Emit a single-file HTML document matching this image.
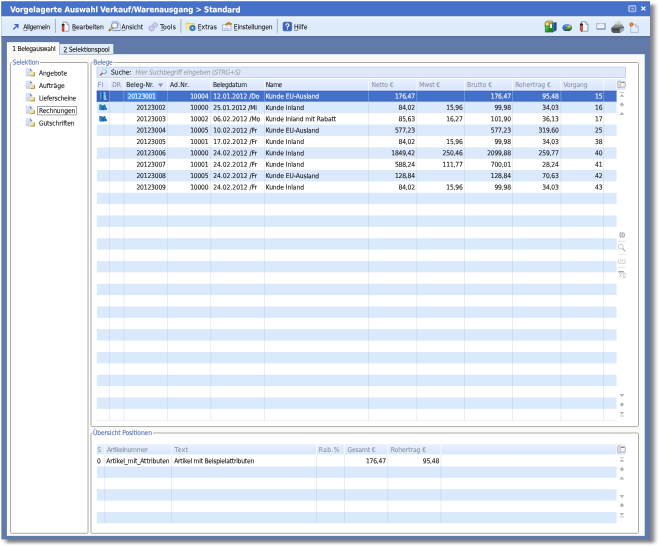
<!DOCTYPE html>
<html><head><meta charset="utf-8"><title>Vorgelagerte Auswahl Verkauf/Warenausgang</title>
<style>
html,body{margin:0;padding:0;background:#fff;}
body{width:659px;height:548px;overflow:hidden;}
svg{display:block;will-change:transform;}
text{font-family:"DejaVu Sans Condensed","Liberation Sans",sans-serif;white-space:pre;stroke-width:0.07px;}
</style></head><body>
<svg width="659" height="548" viewBox="0 0 659 548" font-size="6.7">
<defs>
<filter id="sh" x="-2%" y="-2%" width="104%" height="104%"><feGaussianBlur stdDeviation="2.0 1.5"/></filter>
<linearGradient id="gTb" x1="0" y1="0" x2="0" y2="1"><stop offset="0" stop-color="#f3f8fe"/><stop offset="0.12" stop-color="#e4effc"/><stop offset="0.4" stop-color="#deebfb"/><stop offset="1" stop-color="#deebfb"/></linearGradient>
<linearGradient id="gHd" x1="0" y1="0" x2="0" y2="1"><stop offset="0" stop-color="#e8f1fe"/><stop offset="1" stop-color="#d8e6fc"/></linearGradient>
<linearGradient id="gDoc" x1="0" y1="0" x2="1" y2="1"><stop offset="0" stop-color="#eef2fd"/><stop offset="1" stop-color="#aebbe8"/></linearGradient><linearGradient id="gFol" x1="0" y1="0" x2="1" y2="1"><stop offset="0" stop-color="#fdf8c4"/><stop offset="1" stop-color="#e6cf62"/></linearGradient>
<g id="docf"><path d="M0.6 0.8H8L12 4.8V15H0.6Z" fill="url(#gDoc)" stroke="#aab6de" stroke-width="0.8"/><path d="M8 0.8L12 4.8H8Z" fill="#5c6eb4"/><path d="M7 8.6H10L11 7.6H15.6Q17.2 7.8 17.2 10V15.2H7Z" fill="url(#gFol)"/><path d="M16.2 8V15.2H9" fill="none" stroke="#8c7238" stroke-width="1.2"/></g>
<g id="mag"><circle cx="10" cy="6.4" r="4.4" fill="#d6f1fa" stroke="#a9bedb" stroke-width="1.2"/><path d="M13.8 4.4A4.4 4.4 0 0 1 8.6 10.6" stroke="#6f86b8" stroke-width="1.5" fill="none"/><path d="M6.4 9.9L3.2 13.2" stroke="#ad6a4c" stroke-width="3" stroke-linecap="round"/></g>
<g id="book"><path d="M0.6 0.8L3.4 0.2L7 1.2V3.4L8.8 2.6V0.6L12.6 0.2L13.4 6L15.6 7.8V10.2L12.6 10.8L9.4 11.6L6.6 11L3.6 11.8L0.6 10.6Z" fill="#2b79b6"/><path d="M0.6 0.8L3.4 0.2V11.6L0.6 10.6Z" fill="#3c93cc"/><path d="M6.6 3.4L8.8 2.6V11.4L6.6 11Z" fill="#1b5c98"/><path d="M12.6 0.2L13.4 6L15.6 7.8V10.2L12.6 10.8Z" fill="#1f64a2"/></g>
<g id="bookS"><path d="M0.8 1L5 0.2V10.8L2 11.6Z" fill="#4aa0dc"/><path d="M5 1H8.6V11.8H5Z" fill="#1f4f9a"/><path d="M8.6 0.4L12.2 0L13 8L15.2 11.8H11L8.6 10.8Z" fill="#7fc0f2"/><path d="M12.2 0L13 8L15.2 11.8H13.4L11.6 8Z" fill="#b8dcf8"/></g>
<g id="cfg"><path d="M6 1.6H2.6Q1.2 1.6 1.2 3V12.6Q1.2 14 2.6 14H6" fill="#f2f2f2" stroke="#8e8e8e" stroke-width="1.3"/><rect x="5.4" y="3.4" width="9.4" height="9.4" rx="1.6" fill="#fff" stroke="#8a8a8a" stroke-width="1.2"/><path d="M6.6 3.2H13.6V5.2H6.6Z" fill="#9c8484"/><circle cx="8" cy="8.4" r="0.9" fill="#d8a0a0"/><circle cx="12" cy="8.4" r="0.9" fill="#d8a0a0"/></g>
<g id="n_first" fill="#b3b3b3"><rect x="2" y="1.2" width="8" height="1.6"/><path d="M6 4.5L10.5 10H1.5Z"/></g>
<g id="n_last" fill="#b3b3b3"><rect x="2" y="9.2" width="8" height="1.6"/><path d="M6 7.5L10.5 2H1.5Z"/></g>
<g id="n_dia" fill="#b3b3b3"><path d="M6 1.5L10.5 6L6 10.5L1.5 6Z"/></g>
<g id="n_up" fill="#b3b3b3"><path d="M6 3L11 9H1Z"/></g>
<g id="n_down" fill="#b3b3b3"><path d="M6 9L11 3H1Z"/></g>
<g id="midtools" fill="none" stroke="#c0c0c0" stroke-width="0.8">
<path d="M3.3 1.4Q1.9 4 3.3 6.6M6.5 1.4Q7.9 4 6.5 6.6M4.9 1.2V6.8" stroke="#8e8e8e" stroke-width="0.95"/>
<path d="M0.8 10.3H8.4" stroke="#dedede"/>
<rect x="1.4" y="13.4" width="4.4" height="4.4" rx="0.8"/><path d="M5.6 17.6L8 20.4" stroke="#a8a8a8" stroke-width="1.2"/>
<path d="M0.8 23.3H8.4" stroke="#dedede"/>
<path d="M1.2 28V32.3H7.8V28M3.4 28V30.2H5.6V28" stroke="#c6c6c6"/>
<path d="M0.8 36.4H8.4" stroke="#dedede"/>
<path d="M1 40.8H6.6" stroke="#8a8a8a" stroke-width="1.1"/><path d="M2.2 42L4.2 46.2M4.4 42L2.4 46.2M6 42V46.4H8V42Z" stroke="#c6c6c6"/>
</g>
<g id="arrow"><path d="M1.6 14.4L12.4 3.6M4.6 2.2H13.8V11.4" fill="none" stroke="#3d63b8" stroke-width="3.1"/></g>
<g id="docred"><path d="M4 1.2H11L14.6 4.8V14.8H4Z" fill="#fdfdff" stroke="#6f7686" stroke-width="1.1"/><path d="M11 1.2V4.8H14.6" fill="#e4e8f2" stroke="#6f7686" stroke-width="0.9"/><path d="M1.6 4.2Q4 2.6 7 4.4L6.4 6.8H2.4Z" fill="#2e2424"/><path d="M2.4 6.6H6V13.2L4.2 15.6L2.4 13.2Z" fill="#cf3f24" stroke="#8a2414" stroke-width="0.7"/><path d="M3.9 7.4V12.6" stroke="#f08a6a" stroke-width="0.8"/></g>
<g id="view"><path d="M5.4 1.2H12L15.4 4.6V14.4H5.4Z" fill="#dce8f8" stroke="#a4b6dc" stroke-width="1"/><path d="M12 1.2V4.6H15.4" fill="#c8d8f0" stroke="#a4b6dc" stroke-width="0.8"/><circle cx="8.4" cy="7" r="3.9" fill="#f2fbff" stroke="#8998b8" stroke-width="1.4"/><path d="M5.4 10.4L2.4 13.6" stroke="#7a5a40" stroke-width="3" stroke-linecap="round"/><path d="M5.4 10.3L3.2 12.7" stroke="#e2c464" stroke-width="1.8" stroke-linecap="round"/><path d="M6 14.2H15.2" stroke="#7f98d0" stroke-width="1.4"/></g>
<g id="gears"><circle cx="10.6" cy="5" r="3.6" fill="#d3cfe8" stroke="#aaa5cf" stroke-width="1.7" stroke-dasharray="1.5 1.1"/><circle cx="5.2" cy="10.6" r="4" fill="#cfcbe6" stroke="#a39ecb" stroke-width="1.8" stroke-dasharray="1.6 1.2"/><circle cx="10.6" cy="5" r="1.2" fill="#f1eff9" stroke="#aaa5cf" stroke-width="0.5"/><circle cx="5.2" cy="10.6" r="1.4" fill="#f1eff9" stroke="#a39ecb" stroke-width="0.5"/></g>
<g id="extras"><path d="M1 4L5 2.5L7 4H13.5L15 14H2.5Z" fill="#f7de7e" stroke="#d8b44a" stroke-width="0.9"/><path d="M1 5.5H12L13.5 14.5H2.5Z" fill="#fbe99a"/><circle cx="11" cy="11" r="4.2" fill="#2f7fe0" stroke="#1c5bb8" stroke-width="0.8"/><circle cx="11" cy="11" r="1.4" fill="#d9ecff"/></g>
<g id="settings"><rect x="1" y="5.5" width="13" height="9.5" fill="#f4f7fc" stroke="#8c9bb8" stroke-width="1"/><path d="M2.5 13.5V10L5 11.5L8 8.5L12.5 13.5Z" fill="#b9cdee"/><path d="M5 4.5L10.5 0.8L15.5 3.5L14 5.5L10.5 4L7.5 6.5Z" fill="#d88a1e" stroke="#9c5c10" stroke-width="0.7"/></g>
<g id="help"><rect x="0.6" y="0.6" width="14.8" height="14.8" rx="2" fill="#3c63c2" stroke="#2c4c9e" stroke-width="1"/><path d="M5.2 6Q5.2 3.2 8 3.2Q10.8 3.2 10.8 5.6Q10.8 7.2 8 8.4V10" fill="none" stroke="#fff" stroke-width="2"/><rect x="7" y="11.2" width="2" height="2" fill="#fff"/></g>
<g id="boxes"><path d="M0.6 3.4L3 0.8H10.6L11.4 3.4V8H0.6Z" fill="#a89a3a" stroke="#5c5a2a" stroke-width="0.7"/><path d="M1.6 3.2H5V7H1.6Z" fill="#f0ea9a"/><path d="M3 1.2H10.4L10.8 2.8H2Z" fill="#d0c060"/><path d="M10.8 3.6L15.6 2.8V13.2L10.8 15.2Z" fill="#23518c" stroke="#17325c" stroke-width="0.6"/><path d="M10.8 3.6L12.6 3.3V14.4L10.8 15.2Z" fill="#3f78bc"/><path d="M1 7.6H11V15.6H1Z" fill="#2e9e2e" stroke="#1a5c1e" stroke-width="0.7"/><path d="M1.4 8H6L3 12L1.4 12.6Z" fill="#4fc04a"/><path d="M6 11L11 9V15.4H4Z" fill="#1f7f26"/><path d="M7.4 5H9.8V10H7.4Z" fill="#ffffff"/></g>
<g id="pie"><ellipse cx="8" cy="9.2" rx="7.4" ry="6.2" fill="#1c3868"/><ellipse cx="8" cy="7.6" rx="7.3" ry="5.9" fill="#3e6fb8"/><path d="M2.4 5Q6 1.4 11 2.2L8 7.6Z" fill="#6a98d8"/><path d="M8 7.6L14.9 5.6A7.3 5.9 0 0 1 4.4 12.7Z" fill="#4a9e36"/><path d="M8 7.6L10.2 3.4Q13.8 3.6 14.9 5.6L11.6 8.6Z" fill="#c9cc3c"/><path d="M5.6 12.2Q10 13 13.4 10.6L14.4 11.4Q10 15 5 13.4Z" fill="#245a20"/></g>
<g id="mail"><rect x="0.8" y="0.8" width="14.4" height="13" fill="#f4f5fc" stroke="#8f97bd" stroke-width="1.3"/><path d="M1.2 1.4L8 7.4L14.8 1.4" fill="none" stroke="#c0c5dc" stroke-width="1"/><path d="M0.4 14.6H15.6" stroke="#6b74a4" stroke-width="2"/><path d="M15.2 1V14" stroke="#7a83b0" stroke-width="1.2"/></g>
<g id="printer"><path d="M6.2 0.3H12L13 4.6H5.2Z" fill="#f5f9f0" stroke="#a8b4a4" stroke-width="0.5"/><path d="M7 1.3H11.4L12 3.7H6.4Z" fill="#b4d89c"/><path d="M4.4 4.2H13.6L15.8 8L0.4 9Z" fill="#8e9498"/><path d="M0.4 9L15.8 8V11.6L10.8 15.8H2.6L0.4 13.4Z" fill="#565c60"/><path d="M11 10.4L15.8 8.2V11.6L10.8 15.8Z" fill="#a6aaae"/><path d="M2.2 10.6H9.8V12.1H2.2Z" fill="#34383c"/><path d="M0.4 9L15.8 8" stroke="#3c4044" stroke-width="0.7"/></g>
<g id="docdot"><path d="M2.2 3H10.4L14.8 7.2V15.4H2.2Z" fill="#e3ebf9" stroke="#8fa5d2" stroke-width="1"/><path d="M10.4 3V7.2H14.8" fill="#c5d5f0" stroke="#8fa5d2" stroke-width="0.8"/><circle cx="3.4" cy="3.2" r="2.9" fill="#e8722a" stroke="#b84e18" stroke-width="0.6"/><circle cx="3" cy="2.6" r="1" fill="#f9b478"/></g>
<g id="maxi"><rect x="0.8" y="0.8" width="14.4" height="14.4" rx="1" fill="#86a4e4" stroke="#c9d7f5" stroke-width="1.5"/><rect x="5.2" y="4.6" width="7" height="6.6" fill="#9db6ea" stroke="#3b5bb4" stroke-width="1.5"/><path d="M3.4 12.6L5.6 10.6" stroke="#3b5bb4" stroke-width="1.5"/></g>
<g id="close"><path d="M2 2L14 14M14 2L2 14" stroke="#fff" stroke-width="4.4"/></g>
</defs>

<rect x="5.77" y="4.75" width="648.63" height="537.95" fill="#26262e" opacity="0.6" filter="url(#sh)"/>
<rect x="1.37" y="1.45" width="648.63" height="537.95" fill="#617aa7" />
<rect x="1.37" y="1.45" width="648.63" height="14.85" fill="#4572c8" />
<text x="10.13" y="12.2" transform="rotate(0.05 10.13 12.2)" fill="#fff" stroke="#fff" letter-spacing="-0.025" font-weight="bold" font-size="7.9">Vorgelagerte Auswahl Verkauf/Warenausgang &gt; Standard</text>
<rect x="1.37" y="16.3" width="648.63" height="19.6" fill="url(#gTb)" />
<rect x="1.37" y="34.9" width="648.63" height="1" fill="#f3f8fe" />
<rect x="1.37" y="35.9" width="648.63" height="1.5" fill="#566fa6" />
<rect x="6.9" y="54.4" width="637.8" height="481.5" fill="#fbfaf6" />
<rect x="6.9" y="42.4" width="52.3" height="12.8" fill="#fcfbf8" />
<rect x="6.9" y="42.4" width="52.3" height="0.7" fill="#ffffff" />
<rect x="59.5" y="44.2" width="53.8" height="10.2" fill="#e2ebf8" />
<rect x="59.5" y="44.2" width="53.8" height="0.6" fill="#f3f7fd" />
<rect x="59.4" y="53.9" width="53.9" height="0.7" fill="#a9b6cf" />
<rect x="113.3" y="54.4" width="531.4" height="0.6" fill="#ffffff" opacity="0.8"/>
<text x="12.3" y="50.98" transform="rotate(0.05 12.3 50.98)" fill="#111" stroke="#111" letter-spacing="-0.314">1 Belegauswahl</text>
<text x="63.5" y="51.78" transform="rotate(0.05 63.5 51.78)" fill="#111" stroke="#111" letter-spacing="-0.228">2 Selektionspool</text>
<rect x="63.75" y="52.53" width="3.43" height="0.6" fill="#111" opacity="0.65"/>
<rect x="11.1" y="63.1" width="77.5" height="470.8" rx="1.1" fill="none" stroke="#fff" stroke-width="0.6"/>
<rect x="10.5" y="62.5" width="77.5" height="470.8" rx="1.1" fill="#fff" stroke="#a3a39c" stroke-width="0.9"/>
<rect x="12.1" y="59.5" width="27.9" height="6" fill="#fdfcf9" />
<text x="12.6" y="64.48" transform="rotate(0.05 12.6 64.48)" fill="#4f6fb6" stroke="#4f6fb6" letter-spacing="-0.169" stroke-width="0.02">Selektion</text>
<rect x="91.6" y="63.1" width="547.5" height="364.1" rx="1.1" fill="none" stroke="#fff" stroke-width="0.6"/>
<rect x="91" y="62.5" width="547.5" height="364.1" rx="1.1" fill="#fff" stroke="#a3a39c" stroke-width="0.9"/>
<rect x="92.8" y="59.5" width="20.7" height="6" fill="#fdfcf9" />
<text x="93.3" y="64.48" transform="rotate(0.05 93.3 64.48)" fill="#4f6fb6" stroke="#4f6fb6" letter-spacing="-0.273" stroke-width="0.02">Belege</text>
<rect x="91.6" y="433.6" width="547.5" height="100.3" rx="1.1" fill="none" stroke="#fff" stroke-width="0.6"/>
<rect x="91" y="433" width="547.5" height="100.3" rx="1.1" fill="#fff" stroke="#a3a39c" stroke-width="0.9"/>
<rect x="92.5" y="430" width="60.4" height="6" fill="#fdfcf9" />
<text x="93" y="434.98" transform="rotate(0.05 93 434.98)" fill="#4f6fb6" stroke="#4f6fb6" letter-spacing="-0.133" stroke-width="0.02">Übersicht Positionen</text>
<use href="#docf" transform="translate(25.9 68) scale(0.5222 0.5250)"/>
<text x="38.9" y="75.38" transform="rotate(0.05 38.9 75.38)" fill="#111" stroke="#111" letter-spacing="-0.109">Angebote</text>
<use href="#docf" transform="translate(25.9 80.55) scale(0.5222 0.5250)"/>
<text x="38.9" y="87.93" transform="rotate(0.05 38.9 87.93)" fill="#111" stroke="#111" letter-spacing="-0.016">Aufträge</text>
<use href="#docf" transform="translate(25.9 93.1) scale(0.5222 0.5250)"/>
<text x="38.9" y="100.48" transform="rotate(0.05 38.9 100.48)" fill="#111" stroke="#111" letter-spacing="-0.228">Lieferscheine</text>
<use href="#docf" transform="translate(25.9 105.65) scale(0.5222 0.5250)"/>
<rect x="37.7" y="106.45" width="38.6" height="8.5" fill="none" stroke="#444" stroke-opacity="0.8" stroke-width="0.6"/>
<text x="38.9" y="113.03" transform="rotate(0.05 38.9 113.03)" fill="#111" stroke="#111" letter-spacing="-0.117">Rechnungen</text>
<use href="#docf" transform="translate(25.9 118.2) scale(0.5222 0.5250)"/>
<text x="38.9" y="125.58" transform="rotate(0.05 38.9 125.58)" fill="#111" stroke="#111" letter-spacing="-0.125">Gutschriften</text>
<rect x="97.0" y="67.1" width="528.6" height="10.3" fill="#dfe8f7" stroke="#b4c7ea" stroke-width="0.7"/>
<use href="#mag" transform="translate(98.8 68.2) scale(0.5375 0.5125)"/>
<text x="111.1" y="74.48" transform="rotate(0.05 111.1 74.48)" fill="#111" stroke="#111" letter-spacing="-0.044">Suche:</text>
<text x="135.6" y="74.48" transform="rotate(0.05 135.6 74.48)" fill="#9a9fa8" stroke="#9a9fa8" letter-spacing="-0.159" font-style="italic">Hier Suchbegriff eingeben (STRG+S)</text>
<rect x="96.8" y="78.8" width="529" height="10.95" fill="url(#gHd)" />
<text x="97.6" y="86.98" transform="rotate(0.05 97.6 86.98)" fill="#8e949c" stroke="#8e949c" letter-spacing="0.500">FI</text>
<text x="112.2" y="86.98" transform="rotate(0.05 112.2 86.98)" fill="#8e949c" stroke="#8e949c" letter-spacing="-0.126">DR</text>
<text x="126.2" y="86.98" transform="rotate(0.05 126.2 86.98)" fill="#222" stroke="#222" letter-spacing="0.023">Beleg-Nr.</text>
<text x="169.9" y="86.98" transform="rotate(0.05 169.9 86.98)" fill="#222" stroke="#222" letter-spacing="0.235">Ad.Nr.</text>
<text x="212.9" y="86.98" transform="rotate(0.05 212.9 86.98)" fill="#222" stroke="#222" letter-spacing="-0.270">Belegdatum</text>
<text x="265.8" y="86.98" transform="rotate(0.05 265.8 86.98)" fill="#222" stroke="#222" letter-spacing="-0.427">Name</text>
<text x="371.4" y="86.98" transform="rotate(0.05 371.4 86.98)" fill="#8e949c" stroke="#8e949c" letter-spacing="-0.012">Netto €</text>
<text x="419.3" y="86.98" transform="rotate(0.05 419.3 86.98)" fill="#8e949c" stroke="#8e949c" letter-spacing="-0.116">Mwst €</text>
<text x="467.1" y="86.98" transform="rotate(0.05 467.1 86.98)" fill="#8e949c" stroke="#8e949c" letter-spacing="0.059">Brutto €</text>
<text x="515.2" y="86.98" transform="rotate(0.05 515.2 86.98)" fill="#8e949c" stroke="#8e949c" letter-spacing="0.011">Rohertrag €</text>
<text x="563.4" y="86.98" transform="rotate(0.05 563.4 86.98)" fill="#8e949c" stroke="#8e949c" letter-spacing="-0.086">Vorgang</text>
<path d="M158.1 83.6H163.1L160.6 87.3Z" fill="#8f949b"/>
<rect x="96.8" y="90.75" width="519.8" height="10.82" fill="#4370ca" />
<rect x="96.8" y="90.75" width="519.8" height="0.6" fill="#3358b0" opacity="0.8"/>
<rect x="96.8" y="100.97" width="519.8" height="0.6" fill="#3358b0" opacity="0.8"/>
<rect x="96.8" y="101.82" width="519.8" height="11.37" fill="#dbe9fd" />
<rect x="96.8" y="124.56" width="519.8" height="11.37" fill="#dbe9fd" />
<rect x="96.8" y="147.3" width="519.8" height="11.37" fill="#dbe9fd" />
<rect x="96.8" y="170.04" width="519.8" height="11.37" fill="#dbe9fd" />
<rect x="96.8" y="192.78" width="519.8" height="11.37" fill="#dbe9fd" />
<rect x="96.8" y="215.52" width="519.8" height="11.37" fill="#dbe9fd" />
<rect x="96.8" y="238.26" width="519.8" height="11.37" fill="#dbe9fd" />
<rect x="96.8" y="261" width="519.8" height="11.37" fill="#dbe9fd" />
<rect x="96.8" y="283.74" width="519.8" height="11.37" fill="#dbe9fd" />
<rect x="96.8" y="306.48" width="519.8" height="11.37" fill="#dbe9fd" />
<rect x="96.8" y="329.22" width="519.8" height="11.37" fill="#dbe9fd" />
<rect x="96.8" y="351.96" width="519.8" height="11.37" fill="#dbe9fd" />
<rect x="96.8" y="374.7" width="519.8" height="11.37" fill="#dbe9fd" />
<rect x="96.8" y="397.44" width="519.8" height="11.37" fill="#dbe9fd" />
<rect x="108.85" y="78.8" width="0.9" height="10.95" fill="#fff" opacity="0.8"/>
<rect x="108.95" y="101.82" width="0.7" height="318.36" fill="#a0aed8" opacity="0.32"/>
<rect x="108.95" y="90.45" width="0.7" height="11.37" fill="#fff" opacity="0.35"/>
<rect x="123.45" y="78.8" width="0.9" height="10.95" fill="#fff" opacity="0.8"/>
<rect x="123.55" y="101.82" width="0.7" height="318.36" fill="#a0aed8" opacity="0.32"/>
<rect x="123.55" y="90.45" width="0.7" height="11.37" fill="#fff" opacity="0.35"/>
<rect x="167.25" y="78.8" width="0.9" height="10.95" fill="#fff" opacity="0.8"/>
<rect x="167.35" y="101.82" width="0.7" height="318.36" fill="#a0aed8" opacity="0.32"/>
<rect x="167.35" y="90.45" width="0.7" height="11.37" fill="#fff" opacity="0.35"/>
<rect x="210.35" y="78.8" width="0.9" height="10.95" fill="#fff" opacity="0.8"/>
<rect x="210.45" y="101.82" width="0.7" height="318.36" fill="#a0aed8" opacity="0.32"/>
<rect x="210.45" y="90.45" width="0.7" height="11.37" fill="#fff" opacity="0.35"/>
<rect x="263.85" y="78.8" width="0.9" height="10.95" fill="#fff" opacity="0.8"/>
<rect x="263.95" y="101.82" width="0.7" height="318.36" fill="#a0aed8" opacity="0.32"/>
<rect x="263.95" y="90.45" width="0.7" height="11.37" fill="#fff" opacity="0.35"/>
<rect x="368.25" y="78.8" width="0.9" height="10.95" fill="#fff" opacity="0.8"/>
<rect x="368.35" y="101.82" width="0.7" height="318.36" fill="#a0aed8" opacity="0.32"/>
<rect x="368.35" y="90.45" width="0.7" height="11.37" fill="#fff" opacity="0.35"/>
<rect x="416.35" y="78.8" width="0.9" height="10.95" fill="#fff" opacity="0.8"/>
<rect x="416.45" y="101.82" width="0.7" height="318.36" fill="#a0aed8" opacity="0.32"/>
<rect x="416.45" y="90.45" width="0.7" height="11.37" fill="#fff" opacity="0.35"/>
<rect x="464.15" y="78.8" width="0.9" height="10.95" fill="#fff" opacity="0.8"/>
<rect x="464.25" y="101.82" width="0.7" height="318.36" fill="#a0aed8" opacity="0.32"/>
<rect x="464.25" y="90.45" width="0.7" height="11.37" fill="#fff" opacity="0.35"/>
<rect x="512.05" y="78.8" width="0.9" height="10.95" fill="#fff" opacity="0.8"/>
<rect x="512.15" y="101.82" width="0.7" height="318.36" fill="#a0aed8" opacity="0.32"/>
<rect x="512.15" y="90.45" width="0.7" height="11.37" fill="#fff" opacity="0.35"/>
<rect x="560.45" y="78.8" width="0.9" height="10.95" fill="#fff" opacity="0.8"/>
<rect x="560.55" y="101.82" width="0.7" height="318.36" fill="#a0aed8" opacity="0.32"/>
<rect x="560.55" y="90.45" width="0.7" height="11.37" fill="#fff" opacity="0.35"/>
<rect x="603.25" y="78.8" width="0.9" height="10.95" fill="#fff" opacity="0.8"/>
<rect x="603.35" y="101.82" width="0.7" height="318.36" fill="#a0aed8" opacity="0.32"/>
<rect x="603.35" y="90.45" width="0.7" height="11.37" fill="#fff" opacity="0.35"/>
<rect x="616.4" y="78.8" width="0.8" height="10.95" fill="#fff" opacity="0.85"/>
<rect x="96.8" y="420.08" width="519.8" height="0.6" fill="#c9d3e8" opacity="0.55"/>
<rect x="126.8" y="91.73" width="30" height="8.6" fill="#3f8bee" />
<text x="127.7" y="98.51" transform="rotate(0.05 127.7 98.51)" fill="#fff" stroke="#fff" letter-spacing="-0.367">20123001</text>
<text x="208.43" y="98.51" transform="rotate(0.05 208.43 98.51)" fill="#fff" stroke="#fff" letter-spacing="-0.170" text-anchor="end">10004</text>
<text x="213.2" y="98.51" transform="rotate(0.05 213.2 98.51)" fill="#fff" stroke="#fff" letter-spacing="-0.029">12.01.2012 /Do</text>
<text x="265.6" y="98.51" transform="rotate(0.05 265.6 98.51)" fill="#fff" stroke="#fff" letter-spacing="-0.091">Kunde EU-Ausland</text>
<text x="414.93" y="98.51" transform="rotate(0.05 414.93 98.51)" fill="#fff" stroke="#fff" letter-spacing="-0.170" text-anchor="end">176,47</text>
<text x="510.83" y="98.51" transform="rotate(0.05 510.83 98.51)" fill="#fff" stroke="#fff" letter-spacing="-0.170" text-anchor="end">176,47</text>
<text x="558.63" y="98.51" transform="rotate(0.05 558.63 98.51)" fill="#fff" stroke="#fff" letter-spacing="-0.170" text-anchor="end">95,48</text>
<text x="602.33" y="98.51" transform="rotate(0.05 602.33 98.51)" fill="#fff" stroke="#fff" letter-spacing="-0.170" text-anchor="end">15</text>
<rect x="96.8" y="90.75" width="12.2" height="10.82" fill="#3761b8" />
<use href="#bookS" transform="translate(99.4 91.84) scale(0.4750 0.6917)"/>
<text x="165.73" y="109.88" transform="rotate(0.05 165.73 109.88)" fill="#111" stroke="#111" letter-spacing="-0.170" text-anchor="end">20123002</text>
<text x="208.43" y="109.88" transform="rotate(0.05 208.43 109.88)" fill="#111" stroke="#111" letter-spacing="-0.170" text-anchor="end">10000</text>
<text x="213.2" y="109.88" transform="rotate(0.05 213.2 109.88)" fill="#111" stroke="#111" letter-spacing="-0.109">25.01.2012 /Mi</text>
<text x="265.6" y="109.88" transform="rotate(0.05 265.6 109.88)" fill="#111" stroke="#111" letter-spacing="-0.075">Kunde Inland</text>
<text x="414.93" y="109.88" transform="rotate(0.05 414.93 109.88)" fill="#111" stroke="#111" letter-spacing="-0.170" text-anchor="end">84,02</text>
<text x="462.63" y="109.88" transform="rotate(0.05 462.63 109.88)" fill="#111" stroke="#111" letter-spacing="-0.170" text-anchor="end">15,96</text>
<text x="510.83" y="109.88" transform="rotate(0.05 510.83 109.88)" fill="#111" stroke="#111" letter-spacing="-0.170" text-anchor="end">99,98</text>
<text x="558.63" y="109.88" transform="rotate(0.05 558.63 109.88)" fill="#111" stroke="#111" letter-spacing="-0.170" text-anchor="end">34,03</text>
<text x="602.33" y="109.88" transform="rotate(0.05 602.33 109.88)" fill="#111" stroke="#111" letter-spacing="-0.170" text-anchor="end">16</text>
<use href="#book" transform="translate(99.1 104.41) scale(0.4938 0.5000)"/>
<text x="165.73" y="121.25" transform="rotate(0.05 165.73 121.25)" fill="#111" stroke="#111" letter-spacing="-0.170" text-anchor="end">20123003</text>
<text x="208.43" y="121.25" transform="rotate(0.05 208.43 121.25)" fill="#111" stroke="#111" letter-spacing="-0.170" text-anchor="end">10002</text>
<text x="213.2" y="121.25" transform="rotate(0.05 213.2 121.25)" fill="#111" stroke="#111" letter-spacing="-0.010">06.02.2012 /Mo</text>
<text x="265.6" y="121.25" transform="rotate(0.05 265.6 121.25)" fill="#111" stroke="#111" letter-spacing="-0.111">Kunde Inland mit Rabatt</text>
<text x="414.93" y="121.25" transform="rotate(0.05 414.93 121.25)" fill="#111" stroke="#111" letter-spacing="-0.170" text-anchor="end">85,63</text>
<text x="462.63" y="121.25" transform="rotate(0.05 462.63 121.25)" fill="#111" stroke="#111" letter-spacing="-0.170" text-anchor="end">16,27</text>
<text x="510.83" y="121.25" transform="rotate(0.05 510.83 121.25)" fill="#111" stroke="#111" letter-spacing="-0.170" text-anchor="end">101,90</text>
<text x="558.63" y="121.25" transform="rotate(0.05 558.63 121.25)" fill="#111" stroke="#111" letter-spacing="-0.170" text-anchor="end">36,13</text>
<text x="602.33" y="121.25" transform="rotate(0.05 602.33 121.25)" fill="#111" stroke="#111" letter-spacing="-0.170" text-anchor="end">17</text>
<use href="#book" transform="translate(99.1 115.78) scale(0.4938 0.5000)"/>
<text x="165.73" y="132.62" transform="rotate(0.05 165.73 132.62)" fill="#111" stroke="#111" letter-spacing="-0.170" text-anchor="end">20123004</text>
<text x="208.43" y="132.62" transform="rotate(0.05 208.43 132.62)" fill="#111" stroke="#111" letter-spacing="-0.170" text-anchor="end">10005</text>
<text x="213.2" y="132.62" transform="rotate(0.05 213.2 132.62)" fill="#111" stroke="#111" letter-spacing="0.000">10.02.2012 /Fr</text>
<text x="265.6" y="132.62" transform="rotate(0.05 265.6 132.62)" fill="#111" stroke="#111" letter-spacing="-0.091">Kunde EU-Ausland</text>
<text x="414.93" y="132.62" transform="rotate(0.05 414.93 132.62)" fill="#111" stroke="#111" letter-spacing="-0.170" text-anchor="end">577,23</text>
<text x="510.83" y="132.62" transform="rotate(0.05 510.83 132.62)" fill="#111" stroke="#111" letter-spacing="-0.170" text-anchor="end">577,23</text>
<text x="558.63" y="132.62" transform="rotate(0.05 558.63 132.62)" fill="#111" stroke="#111" letter-spacing="-0.170" text-anchor="end">319,60</text>
<text x="602.33" y="132.62" transform="rotate(0.05 602.33 132.62)" fill="#111" stroke="#111" letter-spacing="-0.170" text-anchor="end">25</text>
<text x="165.73" y="143.99" transform="rotate(0.05 165.73 143.99)" fill="#111" stroke="#111" letter-spacing="-0.170" text-anchor="end">20123005</text>
<text x="208.43" y="143.99" transform="rotate(0.05 208.43 143.99)" fill="#111" stroke="#111" letter-spacing="-0.170" text-anchor="end">10001</text>
<text x="213.2" y="143.99" transform="rotate(0.05 213.2 143.99)" fill="#111" stroke="#111" letter-spacing="0.000">17.02.2012 /Fr</text>
<text x="265.6" y="143.99" transform="rotate(0.05 265.6 143.99)" fill="#111" stroke="#111" letter-spacing="-0.075">Kunde Inland</text>
<text x="414.93" y="143.99" transform="rotate(0.05 414.93 143.99)" fill="#111" stroke="#111" letter-spacing="-0.170" text-anchor="end">84,02</text>
<text x="462.63" y="143.99" transform="rotate(0.05 462.63 143.99)" fill="#111" stroke="#111" letter-spacing="-0.170" text-anchor="end">15,96</text>
<text x="510.83" y="143.99" transform="rotate(0.05 510.83 143.99)" fill="#111" stroke="#111" letter-spacing="-0.170" text-anchor="end">99,98</text>
<text x="558.63" y="143.99" transform="rotate(0.05 558.63 143.99)" fill="#111" stroke="#111" letter-spacing="-0.170" text-anchor="end">34,03</text>
<text x="602.33" y="143.99" transform="rotate(0.05 602.33 143.99)" fill="#111" stroke="#111" letter-spacing="-0.170" text-anchor="end">38</text>
<text x="165.73" y="155.36" transform="rotate(0.05 165.73 155.36)" fill="#111" stroke="#111" letter-spacing="-0.170" text-anchor="end">20123006</text>
<text x="208.43" y="155.36" transform="rotate(0.05 208.43 155.36)" fill="#111" stroke="#111" letter-spacing="-0.170" text-anchor="end">10000</text>
<text x="213.2" y="155.36" transform="rotate(0.05 213.2 155.36)" fill="#111" stroke="#111" letter-spacing="0.000">24.02.2012 /Fr</text>
<text x="265.6" y="155.36" transform="rotate(0.05 265.6 155.36)" fill="#111" stroke="#111" letter-spacing="-0.075">Kunde Inland</text>
<text x="414.93" y="155.36" transform="rotate(0.05 414.93 155.36)" fill="#111" stroke="#111" letter-spacing="-0.170" text-anchor="end">1849,42</text>
<text x="462.63" y="155.36" transform="rotate(0.05 462.63 155.36)" fill="#111" stroke="#111" letter-spacing="-0.170" text-anchor="end">250,46</text>
<text x="510.83" y="155.36" transform="rotate(0.05 510.83 155.36)" fill="#111" stroke="#111" letter-spacing="-0.170" text-anchor="end">2099,88</text>
<text x="558.63" y="155.36" transform="rotate(0.05 558.63 155.36)" fill="#111" stroke="#111" letter-spacing="-0.170" text-anchor="end">259,77</text>
<text x="602.33" y="155.36" transform="rotate(0.05 602.33 155.36)" fill="#111" stroke="#111" letter-spacing="-0.170" text-anchor="end">40</text>
<text x="165.73" y="166.73" transform="rotate(0.05 165.73 166.73)" fill="#111" stroke="#111" letter-spacing="-0.170" text-anchor="end">20123007</text>
<text x="208.43" y="166.73" transform="rotate(0.05 208.43 166.73)" fill="#111" stroke="#111" letter-spacing="-0.170" text-anchor="end">10001</text>
<text x="213.2" y="166.73" transform="rotate(0.05 213.2 166.73)" fill="#111" stroke="#111" letter-spacing="0.000">24.02.2012 /Fr</text>
<text x="265.6" y="166.73" transform="rotate(0.05 265.6 166.73)" fill="#111" stroke="#111" letter-spacing="-0.075">Kunde Inland</text>
<text x="414.93" y="166.73" transform="rotate(0.05 414.93 166.73)" fill="#111" stroke="#111" letter-spacing="-0.170" text-anchor="end">588,24</text>
<text x="462.63" y="166.73" transform="rotate(0.05 462.63 166.73)" fill="#111" stroke="#111" letter-spacing="-0.170" text-anchor="end">111,77</text>
<text x="510.83" y="166.73" transform="rotate(0.05 510.83 166.73)" fill="#111" stroke="#111" letter-spacing="-0.170" text-anchor="end">700,01</text>
<text x="558.63" y="166.73" transform="rotate(0.05 558.63 166.73)" fill="#111" stroke="#111" letter-spacing="-0.170" text-anchor="end">28,24</text>
<text x="602.33" y="166.73" transform="rotate(0.05 602.33 166.73)" fill="#111" stroke="#111" letter-spacing="-0.170" text-anchor="end">41</text>
<text x="165.73" y="178.1" transform="rotate(0.05 165.73 178.1)" fill="#111" stroke="#111" letter-spacing="-0.170" text-anchor="end">20123008</text>
<text x="208.43" y="178.1" transform="rotate(0.05 208.43 178.1)" fill="#111" stroke="#111" letter-spacing="-0.170" text-anchor="end">10005</text>
<text x="213.2" y="178.1" transform="rotate(0.05 213.2 178.1)" fill="#111" stroke="#111" letter-spacing="0.000">24.02.2012 /Fr</text>
<text x="265.6" y="178.1" transform="rotate(0.05 265.6 178.1)" fill="#111" stroke="#111" letter-spacing="-0.091">Kunde EU-Ausland</text>
<text x="414.93" y="178.1" transform="rotate(0.05 414.93 178.1)" fill="#111" stroke="#111" letter-spacing="-0.170" text-anchor="end">128,84</text>
<text x="510.83" y="178.1" transform="rotate(0.05 510.83 178.1)" fill="#111" stroke="#111" letter-spacing="-0.170" text-anchor="end">128,84</text>
<text x="558.63" y="178.1" transform="rotate(0.05 558.63 178.1)" fill="#111" stroke="#111" letter-spacing="-0.170" text-anchor="end">70,63</text>
<text x="602.33" y="178.1" transform="rotate(0.05 602.33 178.1)" fill="#111" stroke="#111" letter-spacing="-0.170" text-anchor="end">42</text>
<text x="165.73" y="189.47" transform="rotate(0.05 165.73 189.47)" fill="#111" stroke="#111" letter-spacing="-0.170" text-anchor="end">20123009</text>
<text x="208.43" y="189.47" transform="rotate(0.05 208.43 189.47)" fill="#111" stroke="#111" letter-spacing="-0.170" text-anchor="end">10000</text>
<text x="213.2" y="189.47" transform="rotate(0.05 213.2 189.47)" fill="#111" stroke="#111" letter-spacing="0.000">24.02.2012 /Fr</text>
<text x="265.6" y="189.47" transform="rotate(0.05 265.6 189.47)" fill="#111" stroke="#111" letter-spacing="-0.075">Kunde Inland</text>
<text x="414.93" y="189.47" transform="rotate(0.05 414.93 189.47)" fill="#111" stroke="#111" letter-spacing="-0.170" text-anchor="end">84,02</text>
<text x="462.63" y="189.47" transform="rotate(0.05 462.63 189.47)" fill="#111" stroke="#111" letter-spacing="-0.170" text-anchor="end">15,96</text>
<text x="510.83" y="189.47" transform="rotate(0.05 510.83 189.47)" fill="#111" stroke="#111" letter-spacing="-0.170" text-anchor="end">99,98</text>
<text x="558.63" y="189.47" transform="rotate(0.05 558.63 189.47)" fill="#111" stroke="#111" letter-spacing="-0.170" text-anchor="end">34,03</text>
<text x="602.33" y="189.47" transform="rotate(0.05 602.33 189.47)" fill="#111" stroke="#111" letter-spacing="-0.170" text-anchor="end">43</text>
<use href="#cfg" transform="translate(617.2 80.4) scale(0.5375 0.5125)"/>
<use href="#n_first" transform="translate(618.9 91.7) scale(0.5000 0.5000)"/>
<use href="#n_dia" transform="translate(618.9 101.5) scale(0.5000 0.5000)"/>
<use href="#n_up" transform="translate(618.9 110.4) scale(0.5000 0.5000)"/>
<use href="#n_down" transform="translate(618.9 392.5) scale(0.5000 0.5000)"/>
<use href="#n_dia" transform="translate(618.9 401.6) scale(0.5000 0.5000)"/>
<use href="#n_last" transform="translate(618.9 411) scale(0.5000 0.5000)"/>
<use href="#midtools" transform="translate(617.2 231) scale(1.0000 1.0000)"/>
<rect x="96.8" y="444.1" width="529" height="10.3" fill="url(#gHd)" />
<rect x="96.8" y="466.47" width="519.8" height="11.37" fill="#dbe9fd" />
<rect x="96.8" y="489.21" width="519.8" height="11.37" fill="#dbe9fd" />
<rect x="96.8" y="511.95" width="519.8" height="11.37" fill="#dbe9fd" />
<rect x="104.35" y="444.1" width="0.9" height="10.3" fill="#fff" opacity="0.8"/>
<rect x="104.45" y="455.1" width="0.7" height="68.22" fill="#a0aed8" opacity="0.32"/>
<rect x="171.15" y="444.1" width="0.9" height="10.3" fill="#fff" opacity="0.8"/>
<rect x="171.25" y="455.1" width="0.7" height="68.22" fill="#a0aed8" opacity="0.32"/>
<rect x="316.15" y="444.1" width="0.9" height="10.3" fill="#fff" opacity="0.8"/>
<rect x="316.25" y="455.1" width="0.7" height="68.22" fill="#a0aed8" opacity="0.32"/>
<rect x="344.15" y="444.1" width="0.9" height="10.3" fill="#fff" opacity="0.8"/>
<rect x="344.25" y="455.1" width="0.7" height="68.22" fill="#a0aed8" opacity="0.32"/>
<rect x="387.35" y="444.1" width="0.9" height="10.3" fill="#fff" opacity="0.8"/>
<rect x="387.45" y="455.1" width="0.7" height="68.22" fill="#a0aed8" opacity="0.32"/>
<rect x="440.45" y="444.1" width="0.9" height="10.3" fill="#fff" opacity="0.8"/>
<rect x="440.55" y="455.1" width="0.7" height="68.22" fill="#a0aed8" opacity="0.32"/>
<rect x="616.4" y="444.1" width="0.8" height="10.3" fill="#fff" opacity="0.85"/>
<text x="97.3" y="452.08" transform="rotate(0.05 97.3 452.08)" fill="#8e949c" stroke="#8e949c" letter-spacing="0.276">S</text>
<text x="107.1" y="452.08" transform="rotate(0.05 107.1 452.08)" fill="#8e949c" stroke="#8e949c" letter-spacing="-0.337">Artikelnummer</text>
<text x="174.7" y="452.08" transform="rotate(0.05 174.7 452.08)" fill="#8e949c" stroke="#8e949c" letter-spacing="0.500">Text</text>
<text x="318.8" y="452.08" transform="rotate(0.05 318.8 452.08)" fill="#8e949c" stroke="#8e949c" letter-spacing="0.400">Rab.%</text>
<text x="347.5" y="452.08" transform="rotate(0.05 347.5 452.08)" fill="#8e949c" stroke="#8e949c" letter-spacing="-0.156">Gesamt €</text>
<text x="390.7" y="452.08" transform="rotate(0.05 390.7 452.08)" fill="#8e949c" stroke="#8e949c" letter-spacing="-0.019">Rohertrag €</text>
<text x="97" y="463.16" transform="rotate(0.05 97 463.16)" fill="#111" stroke="#111" letter-spacing="-0.170">0</text>
<text x="106.3" y="463.16" transform="rotate(0.05 106.3 463.16)" fill="#111" stroke="#111" letter-spacing="-0.101">Artikel_mit_Attributen</text>
<text x="174.2" y="463.16" transform="rotate(0.05 174.2 463.16)" fill="#111" stroke="#111" letter-spacing="-0.223">Artikel mit Beispielattributen</text>
<text x="385.93" y="463.16" transform="rotate(0.05 385.93 463.16)" fill="#111" stroke="#111" letter-spacing="-0.170" text-anchor="end">176,47</text>
<text x="439.13" y="463.16" transform="rotate(0.05 439.13 463.16)" fill="#111" stroke="#111" letter-spacing="-0.170" text-anchor="end">95,48</text>
<use href="#cfg" transform="translate(617.2 445.3) scale(0.5375 0.5125)"/>
<use href="#n_first" transform="translate(618.9 456.8) scale(0.5000 0.5000)"/>
<use href="#n_dia" transform="translate(618.9 466.3) scale(0.5000 0.5000)"/>
<use href="#n_up" transform="translate(618.9 475) scale(0.5000 0.5000)"/>
<use href="#n_down" transform="translate(618.9 493.6) scale(0.5000 0.5000)"/>
<use href="#n_dia" transform="translate(618.9 502.2) scale(0.5000 0.5000)"/>
<use href="#n_last" transform="translate(618.9 511.9) scale(0.5000 0.5000)"/>
<rect x="54.95" y="19" width="0.9" height="13.8" fill="#a0abc0" />
<rect x="180.45" y="19" width="0.9" height="13.8" fill="#a0abc0" />
<rect x="276.85" y="19" width="0.9" height="13.8" fill="#a0abc0" />
<text x="23.3" y="29.28" transform="rotate(0.05 23.3 29.28)" fill="#111" stroke="#111" letter-spacing="-0.398">Allgemein</text>
<rect x="23.55" y="30.03" width="3.72" height="0.6" fill="#111" opacity="0.65"/>
<text x="72.1" y="29.28" transform="rotate(0.05 72.1 29.28)" fill="#111" stroke="#111" letter-spacing="-0.158">Bearbeiten</text>
<rect x="72.35" y="30.03" width="3.74" height="0.6" fill="#111" opacity="0.65"/>
<text x="121.6" y="29.28" transform="rotate(0.05 121.6 29.28)" fill="#111" stroke="#111" letter-spacing="-0.125">Ansicht</text>
<rect x="121.85" y="30.03" width="3.72" height="0.6" fill="#111" opacity="0.65"/>
<text x="160.3" y="29.28" transform="rotate(0.05 160.3 29.28)" fill="#111" stroke="#111" letter-spacing="0.218">Tools</text>
<rect x="160.55" y="30.03" width="3.28" height="0.6" fill="#111" opacity="0.65"/>
<text x="197.8" y="29.28" transform="rotate(0.05 197.8 29.28)" fill="#111" stroke="#111" letter-spacing="-0.009">Extras</text>
<rect x="198.05" y="30.03" width="3.41" height="0.6" fill="#111" opacity="0.65"/>
<text x="233.8" y="29.28" transform="rotate(0.05 233.8 29.28)" fill="#111" stroke="#111" letter-spacing="-0.172">Einstellungen</text>
<rect x="234.05" y="30.03" width="3.41" height="0.6" fill="#111" opacity="0.65"/>
<text x="293.9" y="29.28" transform="rotate(0.05 293.9 29.28)" fill="#111" stroke="#111" letter-spacing="-0.053">Hilfe</text>
<rect x="294.15" y="30.03" width="4.13" height="0.6" fill="#111" opacity="0.65"/>
<use href="#arrow" transform="translate(12.6 23.8) scale(0.3875 0.4000)"/>
<use href="#docred" transform="translate(60.8 21.4) scale(0.5500 0.6625)"/>
<use href="#view" transform="translate(107.8 20.6) scale(0.8125 0.7000)"/>
<use href="#gears" transform="translate(148.2 21.8) scale(0.6500 0.6250)"/>
<use href="#extras" transform="translate(185.2 21) scale(0.6625 0.6375)"/>
<use href="#settings" transform="translate(222 21.6) scale(0.6375 0.6000)"/>
<use href="#help" transform="translate(282.8 21.9) scale(0.5750 0.5813)"/>
<use href="#boxes" transform="translate(544.6 20.4) scale(0.7500 0.7500)"/>
<use href="#pie" transform="translate(562.2 23.4) scale(0.6250 0.5000)"/>
<use href="#docred" transform="translate(578.8 21) scale(0.6250 0.6875)"/>
<use href="#mail" transform="translate(596.4 23) scale(0.5688 0.4187)"/>
<use href="#printer" transform="translate(611 21.4) scale(0.8250 0.7375)"/>
<use href="#docdot" transform="translate(629.4 22.3) scale(0.6000 0.6562)"/>
<use href="#maxi" transform="translate(628.3 5.3) scale(0.4938 0.4250)"/>
<use href="#close" transform="translate(640.8 6) scale(0.3250 0.3125)"/>
</svg>
</body></html>
